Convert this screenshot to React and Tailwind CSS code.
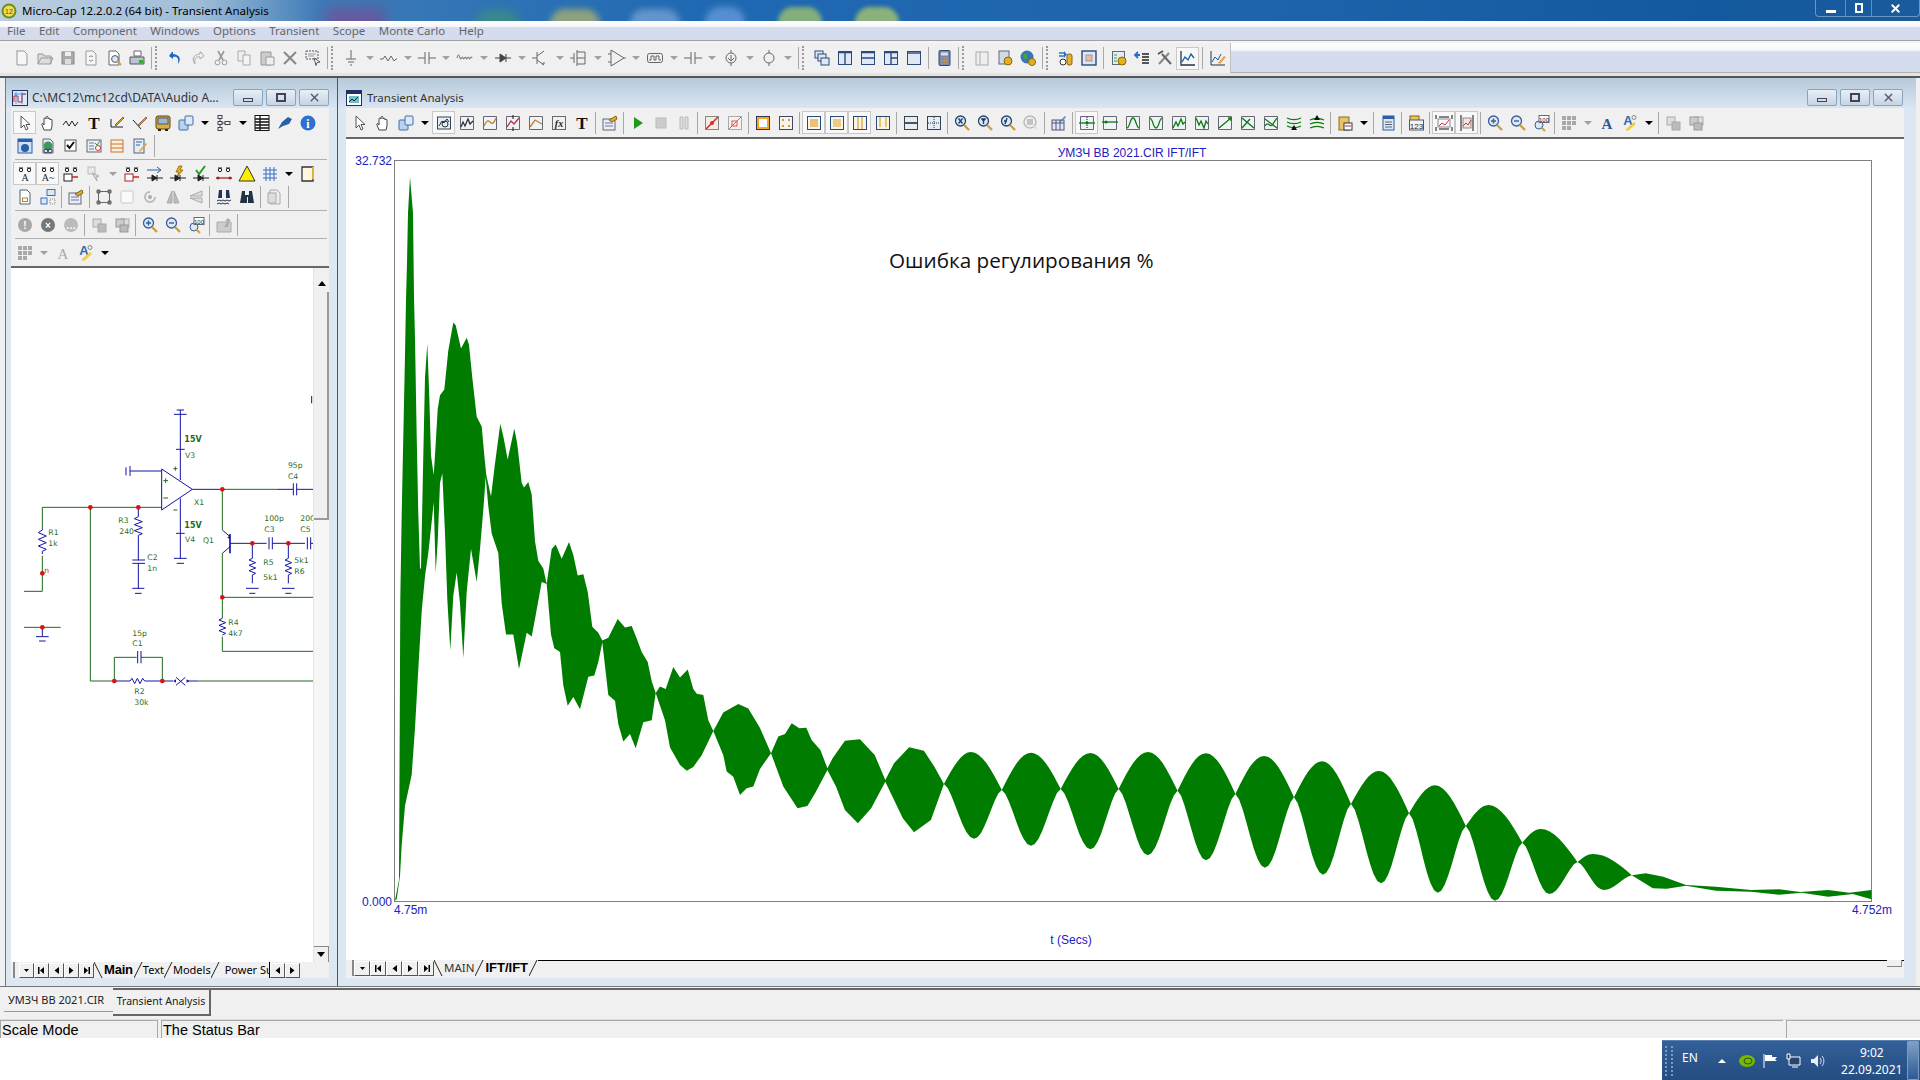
import { X } from "lucide-react";

// waveform outline, traced per crop then mapped to page coords
const z9 = (p) => p.map(([x, y]) => [395 + x / 3, 300 + y / 2.57]);
const z10 = (p) => p.map(([x, y]) => [780 + x / 2.85, 680 + y / 3]);
const z11 = (p) => p.map(([x, y]) => [1330 + x / 2.85, 720 + y / 3]);

// regular beat lobes on the right: pinch x,y then top peak and bottom peak
const pinches = [[943.9,784],[1001.8,790],[1060.7,789],[1118.6,789],[1177.5,790.7],[1235.4,794],[1294,797.3],[1351,804],[1409,813.3],[1465.8,826],[1522.3,842.7],[1577.4,862],[1631.8,875.3]];
const topPk = [[971,752],[1031,752.7],[1090.5,753],[1148,752],[1206,753.3],[1264,756],[1322,761.3],[1379,771],[1435,785.3],[1488.6,805],[1540.5,829],[1593,854]];
const botPk = [[974,838.7],[1031,845.7],[1090.5,849.3],[1147.7,855.3],[1206,860.3],[1265,867.7],[1323,874.7],[1381,883.3],[1437.7,892.7],[1495,900.7],[1549.3,894],[1603.7,890]];
const side = (a, b, f) => {
  const out = [];
  for (let i = 0; i <= 8; i++) {
    const u = i / 8;
    out.push([a[0] + (b[0] - a[0]) * u, a[1] + (b[1] - a[1]) * f(u)]);
  }
  return out;
};
const dome = (u) => Math.sin((u * Math.PI) / 2);
const tip = (u) => Math.pow(Math.sin((u * Math.PI) / 2), 1.6);
const lobesTop = pinches.slice(0, -1).flatMap((p, i) => [
  ...side(p, topPk[i], dome),
  ...side(pinches[i + 1], topPk[i], dome).reverse().slice(1),
]);
const lobesBot = pinches.slice(0, -1).flatMap((p, i) => [
  ...side(p, botPk[i], tip),
  ...side(pinches[i + 1], botPk[i], tip).reverse().slice(1),
]).reverse();

const wave = [
  ...z9([[0,1543],[12,1490],[16,770],[20,550],[25,350],[30,140],[33,0]]),
  [407,263],[408,213],[410,177],[413,213],[414,297],
  ...z9([[60,100],[65,350],[70,550],[75,690],[78,690],[85,400],[90,200],[97,112],[103,250],[108,400],[116,450],[120,400],[128,280],[135,245],[148,230],[160,130],[175,58],[182,65],[198,125],[215,97],[222,115],[232,200],[245,300],[260,325],[268,400],[274,450],[288,505],[300,420],[316,318],[325,350],[338,410],[358,330],[367,370],[380,470],[387,482],[400,468],[410,500],[420,620],[430,670],[445,690],[455,730],[470,640],[482,628],[500,665],[522,622],[535,655],[548,708],[565,705],[578,750],[592,840],[610,855],[622,875],[640,868],[668,820],[690,842],[710,838],[725,870],[740,905],[758,930],[770,980],[782,1010],[795,993],[812,1000],[835,943],[855,970],[878,950],[895,1000],[905,1012],[925,1015],[940,1080],[955,1108],[985,1060],[1030,1038],[1060,1050],[1095,1100],[1128,1165],[1150,1122],[1170,1115],[1190,1088]]),
  ...z10([[55,145],[75,143],[90,180],[115,210],[135,265],[150,235],[185,182],[228,178],[270,225],[300,300],[325,250],[368,202],[410,212],[440,260]]),
  ...lobesTop,
  ...z11([[900,460],[950,470],[1015,495],[1100,500],[1200,510],[1280,508],[1340,516],[1420,510],[1480,518],[1543,510],[1543,538],[1490,522],[1420,530],[1345,518],[1280,524],[1200,515],[1100,512],[1015,497],[960,506],[920,505]]),
  ...lobesBot,
  ...z10([[430,420],[382,457],[350,415],[300,305],[260,385],[222,430],[185,390],[160,320],[135,270],[100,340],[78,378],[50,385]]),
  ...z9([[1165,1250],[1128,1165],[1095,1205],[1075,1250],[1055,1255],[1035,1272],[1015,1225],[995,1212],[985,1170],[955,1108],[920,1170],[895,1200],[875,1210],[855,1195],[825,1150],[810,1080],[782,1010],[770,1080],[745,1085],[722,1152],[705,1115],[685,1135],[670,1090],[660,1030],[640,1015],[622,880],[610,930],[598,965],[580,968],[555,1052],[535,1020],[518,1043],[505,990],[495,905],[478,895],[468,860],[455,730],[440,725],[420,820],[410,865],[395,855],[372,948],[355,860],[333,860],[320,780],[310,650],[290,600],[280,530],[272,455],[265,540],[255,640],[245,725],[228,640],[215,750],[205,920],[195,780],[185,700],[175,760],[166,900],[157,770],[150,600],[142,445],[135,470],[128,620],[122,700],[116,520],[110,570],[100,650],[90,710],[80,800],[70,950],[60,1100],[50,1220],[30,1300],[20,1400],[15,1480],[5,1540]]),
];
const wavePts = wave.map(([x, y]) => `${x.toFixed(1)},${y.toFixed(1)}`).join(" ");

// toolbar glyph helpers
const S = (p) => <g fill="none" strokeWidth="1" {...p} />;
const page = (c = "#999", f = "#f6f6f6") => <path d="M4 2h7l3 3v11H4z" fill={f} stroke={c} />;
const peak = (d, c = "#0a7a0a") => (
  <>
    <path d="M2.5 2.5h13v13h-13z" fill="#eef3f8" stroke="#667" />
    <path d={d} fill="none" stroke={c} strokeWidth="1.3" />
  </>
);
const win = (inner) => (
  <>
    <rect x="2.5" y="2.5" width="13" height="13" fill="#dfe9f6" stroke="#2b4a7a" />
    <path d={inner} fill="none" stroke="#2b4a7a" strokeWidth="1.4" />
  </>
);
const comp = (d) => <path d={d} fill="none" stroke="#666" />;
const mag = (sign, c = "#3a5d9a") => (
  <>
    <circle cx="7.5" cy="7" r="5" fill="#dbe8f6" stroke={c} strokeWidth="1.3" />
    <path d="M11 11l5 5" stroke="#c9a13d" strokeWidth="2.4" />
    <path d={sign} stroke={c} strokeWidth="1.4" />
  </>
);
const round = (label, f = "#a8a8a8") => (
  <>
    <circle cx="9" cy="9" r="7" fill={f} />
    <text x="9" y="12.5" fontSize="10" fontWeight="700" textAnchor="middle" fill="#fff" fontFamily="Liberation Sans, sans-serif">{label}</text>
  </>
);
const probe = (label, c = "#222") => (
  <>
    <path d="M3 3h4M11 3h4" stroke="#222" strokeWidth="1" />
    <circle cx="5" cy="5" r="1.7" fill="none" stroke="#222" />
    <circle cx="13" cy="5" r="1.7" fill="none" stroke="#222" />
    <text x="9" y="16" fontSize="10" textAnchor="middle" fill={c} fontFamily="Liberation Serif, serif">{label}</text>
  </>
);
const diodeH = <path d="M1 13h16M6 10l5 3-5 3zM11 10v6" fill="#222" stroke="#222" />;
const stack = (c = "#aaa") => (
  <>
    <rect x="3" y="3" width="8" height="8" fill="#ddd" stroke={c} />
    <rect x="8" y="8" width="8" height="8" fill="#bbb" stroke={c} />
  </>
);
const bars = (c) => (
  <>
    <rect x="2.5" y="2.5" width="13" height="13" fill="#f8f4e6" stroke="#2b4a7a" />
    <path d={c} stroke="#e0a030" strokeWidth="1.2" fill="none" />
  </>
);
const cube = (
  <>
    <rect x="2" y="6" width="9" height="10" rx="1" fill="#b9d2ee" stroke="#3f6da8" />
    <rect x="8" y="2" width="8" height="9" rx="1" fill="#dce9f8" stroke="#3f6da8" />
  </>
);
const clipB = (
  <>
    <rect x="3" y="3" width="10" height="13" fill="#e6c46a" stroke="#8a6a20" />
    <rect x="8" y="9" width="8" height="7" fill="#fff" stroke="#335" />
    <path d="M9 12h6" stroke="#a33" />
  </>
);

const ic = {
  new: <>{page()}<path d="M3 1l1 2 2-1" stroke="#bbb" fill="none" /></>,
  open: <path d="M2 15V5h5l1 2h7v8zM2 15l3-6h12l-3 6" fill="#ddd" stroke="#999" />,
  save: <><rect x="3" y="3" width="12" height="12" fill="#aaa" stroke="#888" /><rect x="6" y="3" width="6" height="4" fill="#eee" /><rect x="6" y="10" width="6" height="5" fill="#ddd" /></>,
  saveas: <>{page()}<path d="M7 8a2.5 2.5 0 014 0M11 11a2.5 2.5 0 01-4 0" stroke="#888" fill="none" /></>,
  preview: <>{page("#667", "#fff")}<circle cx="10" cy="10" r="3.4" fill="#dde8f5" stroke="#556" /><path d="M12 12l4 4" stroke="#c9a13d" strokeWidth="2.2" /></>,
  print: <><path d="M6 2h7v5H6z" fill="#fff" stroke="#667" /><path d="M2 8h14v7H2z" fill="#bcc4cc" stroke="#556" /><rect x="11" y="11" width="4" height="3" fill="#3a3" /></>,
  undo: <path d="M6 3L3 7l4 3V8c4-1 6 1 5 7 3-4 3-9-5-10V3z" fill="#1d66c8" />,
  redo: <path d="M12 3l3 4-4 3V8C7 7 5 9 6 15 3 11 3 6 11 5V3z" fill="none" stroke="#aaa" />,
  cut: <S stroke="#999"><path d="M6 2l5 9M12 2l-5 9" strokeWidth="1.6" /><circle cx="5.5" cy="13.5" r="2.4" /><circle cx="12.5" cy="13.5" r="2.4" /></S>,
  copy: <><path d="M3 2h7v10H3z" fill="#eee" stroke="#aaa" /><path d="M8 6h7v10H8z" fill="#f4f4f4" stroke="#aaa" /></>,
  paste: <><path d="M3 3h10v13H3z" fill="#ccc" stroke="#999" /><path d="M8 8h8v8H8z" fill="#eee" stroke="#999" /></>,
  del: <path d="M3 3l12 12M15 3L3 15" stroke="#888" strokeWidth="2" />,
  sel: <><path d="M2 2h12v8H2z" fill="none" stroke="#556" strokeDasharray="2 1" /><path d="M4 5h8M4 7h6" stroke="#99a" /><path d="M10 9l6 4-3 .5-1 3z" fill="#fff" stroke="#556" /></>,
  ground: comp("M9 1v9M4 10h10M6 13h6M8 16h2"),
  res: comp("M0 10l3 0 2-3 3 5 3-5 3 5 2-2h1"),
  cap: comp("M0 9h7M7 3v12M11 3v12M11 9h7"),
  ind: comp("M1 9c1-4 2-4 3 0s2-4 3 0 2-4 3 0 2-4 3 0 2-4 3 0"),
  diode: <path d="M1 9h16M6 5l6 4-6 4zM12 5v8" fill="#444" stroke="#444" />,
  bjt: comp("M5 3v12M5 7l7-5M5 11l7 5M0 9h5M10 15h2v-2"),
  mos: comp("M7 1v16M4 4v10M0 9h4M7 3h8M7 15h8M7 9h8M15 3v12"),
  opamp: comp("M3 1v16l13-8zM0 5h3M0 13h3M16 9h2"),
  pulse: <><rect x="1.5" y="4.5" width="15" height="9" rx="2" fill="none" stroke="#666" /><path d="M3 11h2V7h3v4h2V7h3v4h2" fill="none" stroke="#666" /></>,
  vs: <><circle cx="9" cy="9" r="5" fill="none" stroke="#666" /><path d="M9 1v3M9 14v3M9 6v6M6 9l3 3 3-3" fill="none" stroke="#666" /></>,
  bat: <><circle cx="9" cy="9" r="5" fill="none" stroke="#666" /><path d="M9 1v3M9 14v3" stroke="#666" /></>,
  cascade: <><rect x="2" y="2" width="8" height="7" fill="#dfe9f6" stroke="#2b4a7a" /><rect x="5" y="5" width="8" height="7" fill="#dfe9f6" stroke="#2b4a7a" /><rect x="8" y="9" width="8" height="7" fill="#dfe9f6" stroke="#2b4a7a" /></>,
  tilev: win("M9 3v12M3 3.5h12"),
  tileh: win("M3 9h12M3 3.5h12"),
  tile3: win("M9 3v12M9 9h6M3 3.5h12"),
  maxw: win("M3 4h12"),
  calc: <><rect x="4" y="1.5" width="11" height="15" rx="1" fill="#7389ad" stroke="#3a4a66" /><rect x="6" y="3.5" width="7" height="3" fill="#dde" /><path d="M6 9h7M6 11.5h7M6 14h7" stroke="#e8a050" strokeDasharray="1.5 1" /></>,
  panel: <><rect x="3" y="3" width="12" height="13" fill="#eee" stroke="#aaa" /><path d="M7 3v13" stroke="#aaa" /></>,
  cfg: <><rect x="3" y="2" width="10" height="13" fill="#cfdbe8" stroke="#667" /><circle cx="12" cy="12" r="4" fill="#e4b020" stroke="#8a6a10" /></>,
  globe: <><circle cx="8" cy="8" r="6.5" fill="#3a76b6" /><path d="M4 6c3-3 5 0 4 3s-3 2-4-3z" fill="#4aa04a" /><circle cx="13" cy="13" r="3.5" fill="#e4b020" stroke="#8a6a10" /></>,
  meter: <><path d="M2 4h6M2 7h6" stroke="#27c" strokeWidth="1.4" /><path d="M7 2l3 3.5L7 9" fill="#27c" /><circle cx="6" cy="13" r="3" fill="#fff" stroke="#333" /><rect x="10" y="5" width="5" height="11" rx="2" fill="#e6b030" stroke="#860" /></>,
  box: <><rect x="2" y="2" width="14" height="14" fill="#dbe7f4" stroke="#2b4a7a" strokeWidth="1.4" /><rect x="6" y="6" width="6" height="6" fill="#f0b8a0" stroke="#999" /></>,
  chkgear: <><rect x="2.5" y="2.5" width="12" height="13" fill="#e4edf6" stroke="#667" /><path d="M4 6h3M4 9h3M4 12h3" stroke="#3a3" /><circle cx="12" cy="12" r="4" fill="#e4b020" stroke="#8a6a10" /></>,
  sort: <><path d="M2 6h5M5 3L2 6l3 3" stroke="#2a6bc8" strokeWidth="1.8" fill="none" /><path d="M9 5h7M9 8h7M9 11h7M9 14h7" stroke="#222" strokeWidth="1.4" /></>,
  tools: <><path d="M3 15L13 4" stroke="#888" strokeWidth="2" /><path d="M15 15L6 5" stroke="#666" strokeWidth="2" /><path d="M2 5l5-3" stroke="#555" strokeWidth="2" /></>,
  chart: <><path d="M2 2v14h14" stroke="#234" strokeWidth="1.3" fill="none" /><path d="M3 13l3-5 3 3 3-6 3 4" stroke="#1a5a9a" strokeWidth="1.3" fill="none" /></>,
  chartedit: <><path d="M2 2v14h14" stroke="#234" fill="none" /><path d="M3 13l3-5 3 3 3-6" stroke="#1a5a9a" fill="none" /><path d="M9 14l6-7 2 1-6 7z" fill="#e6a050" /></>,
  cursor: <path d="M5 2v12l3-3 2 5 2-1-2-4.5h4z" fill="#fff" stroke="#555" />,
  hand: <path d="M5 16l-2-5c-.5-2 1-2 2 0V5c0-1.500 2-1.500 2 0V3.500c0-1.500 2-1.500 2 0V5c0-1 2-1 2 0v1c0-1 2-1 2 0v6l-1 4z" fill="#fff" stroke="#444" />,
  zig: <path d="M1 11l3-4 3 5 3-5 3 5 3-4" fill="none" stroke="#222" />,
  T: <text x="9" y="15" fontSize="17" fontWeight="700" textAnchor="middle" fill="#111" fontFamily="Liberation Serif, serif">T</text>,
  pen1: <><path d="M2 4v8h12" stroke="#123" fill="none" transform="translate(1 1)" /><path d="M7 11l8-8 1 1-8 8z" fill="#e0a030" stroke="#964" /></>,
  pen2: <><path d="M2 6l8 9" stroke="#123" /><path d="M7 11l8-8 1 1-8 8z" fill="#e0a030" stroke="#964" /></>,
  bus: <><rect x="2" y="2" width="14" height="13" rx="2" fill="#d6b040" stroke="#5a4510" /><rect x="4" y="4" width="10" height="6" fill="#9fb6d0" stroke="#556" /><path d="M4 16h3M11 16h3" stroke="#222" strokeWidth="2" /></>,
  cube,
  tree: <S stroke="#445"><rect x="3" y="1.500" width="4" height="3" /><rect x="3" y="7.500" width="4" height="3" /><rect x="3" y="13.500" width="4" height="3" /><rect x="10" y="7.500" width="5" height="3" /><path d="M5 4.500v3M5 10.500v3M7 9h3" /></S>,
  table: <><rect x="2" y="1.500" width="14" height="15" fill="#fff" stroke="#111" /><path d="M2 5h14M2 8h14M2 11h14M2 14h14M7 2v14" stroke="#111" strokeWidth="1.3" /></>,
  pin: <path d="M2 15l4-7 6-5 4 2-3 5-6 2z" fill="#2b5fa8" />,
  info: <><circle cx="9" cy="9" r="7.5" fill="#2e6fd0" /><text x="9" y="14" fontSize="12" fontWeight="700" textAnchor="middle" fill="#fff" fontFamily="Liberation Serif, serif">i</text></>,
  help: <><rect x="2" y="2" width="14" height="14" fill="#cfe0f2" stroke="#2a5ea8" /><rect x="2" y="2" width="14" height="3" fill="#2a5ea8" /><circle cx="9" cy="11" r="4" fill="#2a5ea8" /></>,
  web: <>{page("#667", "#e8eef4")}<circle cx="9" cy="9" r="4.500" fill="#3a9a5a" /><circle cx="7" cy="14" r="2" fill="none" stroke="#336" /><circle cx="11" cy="14" r="2" fill="none" stroke="#336" /></>,
  chk: <><rect x="3" y="3" width="11" height="11" fill="#fff" stroke="#555" /><path d="M5 8l2.500 3L12 5" stroke="#111" strokeWidth="2" fill="none" /></>,
  form: <><rect x="2" y="3" width="14" height="12" fill="#e9f0f6" stroke="#667" /><path d="M4 6h5M4 9h5M4 12h5" stroke="#779" /><circle cx="13" cy="11" r="2.500" fill="#fff" stroke="#d33" /><path d="M10 6l2 2 3-4" stroke="#393" fill="none" /></>,
  rows: <><rect x="3" y="3" width="12" height="12" fill="#fbeedd" stroke="#c9762a" /><path d="M3 7h12M3 11h12" stroke="#c9762a" /></>,
  notepen: <><rect x="3" y="2" width="10" height="14" fill="#e4ecf6" stroke="#567" /><path d="M5 5h6M5 8h4" stroke="#36a" /><path d="M8 14l7-8 1 1-7 8z" fill="#e0a030" /></>,
  pa: probe("A"),
  pw: probe("A~"),
  pn: <>{probe("")}<rect x="2" y="9" width="8" height="7" fill="#fff" stroke="#222" /><path d="M10 12h6" stroke="#c22" strokeWidth="1.500" /></>,
  pv: <>{probe("")}<rect x="2" y="9" width="8" height="7" fill="#fff" stroke="#a22" /><path d="M10 12h6" stroke="#c22" strokeWidth="1.500" /></>,
  ghost: <><rect x="3" y="2" width="7" height="7" fill="#e8e8e8" stroke="#bbb" /><path d="M7 8l7 3-3 1 1 4z" fill="#ddd" stroke="#aaa" /></>,
  dArrow: <><path d="M1 5h13M11 2l4 3-4 3" stroke="#2a5ea8" fill="none" />{diodeH}</>,
  dBolt: <><path d="M10 1L7 7h3L8 12l6-7h-3l2-4z" fill="#e4b020" stroke="#a07510" />{diodeH}</>,
  dCheck: <><path d="M4 5l3 4 6-8" stroke="#2a9a2a" strokeWidth="2" fill="none" />{diodeH}</>,
  pline: <>{probe("")}<path d="M1 13h16" stroke="#a22" strokeWidth="1.300" /><circle cx="3" cy="13" r="1.500" fill="#a22" /><circle cx="15" cy="13" r="1.500" fill="#a22" /></>,
  tri: <path d="M9 1L17 16H1z" fill="#ffee00" stroke="#333" />,
  grid: <path d="M2 5h14M2 9h14M2 13h14M5 2v14M9 2v14M13 2v14" stroke="#3a6fc0" fill="none" />,
  note: <><path d="M3 2h11v14H3z" fill="#fff7dd" stroke="#333" strokeWidth="1.300" /><path d="M14 2v12" stroke="#e0b040" strokeWidth="2" /></>,
  pageO: <>{page("#467", "#fff")}<rect x="6.500" y="10" width="5" height="3.500" fill="none" stroke="#c9762a" /></>,
  flow: <><rect x="8" y="1.500" width="8" height="6" fill="#dde8f4" stroke="#3a6fc0" /><rect x="2" y="10" width="6" height="6" fill="#dde8f4" stroke="#3a6fc0" /><rect x="11" y="11" width="5" height="5" fill="none" stroke="#888" strokeDasharray="1 1" /></>,
  clip: <><rect x="2" y="5" width="12" height="11" fill="#e6eef6" stroke="#667" /><path d="M4 9h8M4 12h8" stroke="#77a" /><path d="M8 6l7-4 1 3-5 3z" fill="#d8aa40" stroke="#860" /></>,
  handles: <S stroke="#666"><rect x="3.500" y="3.500" width="11" height="11" /><path d="M2 2h3v3H2zM13 2h3v3h-3zM2 13h3v3H2zM13 13h3v3h-3z" fill="#777" /></S>,
  blank: <rect x="3" y="3" width="12" height="12" rx="1.500" fill="#fafafa" stroke="#c8c8c8" />,
  rot: <><path d="M14 9a5 5 0 11-5-5" stroke="#bbb" strokeWidth="2" fill="none" /><circle cx="9" cy="9" r="2" fill="#aaa" /></>,
  mirv: <path d="M8 3v12H3zM10 3v12h5z" fill="#bbb" stroke="#aaa" />,
  mirh: <path d="M15 8H3l12-5zM15 10H3l12 5z" fill="#ddd" stroke="#aaa" />,
  binW: <><path d="M4 2h3v8H3zM11 2h3l1 8h-4z" fill="#235" /><path d="M2 13l2-1 2 1 2-1 2 1 2-1 2 1 2-1" stroke="#235" fill="none" /><path d="M2 16l2-1 2 1 2-1 2 1 2-1 2 1" stroke="#235" fill="none" /></>,
  bin: <><path d="M4 3h3v4h4V3h3l2 12h-6V9H9v6H2z" fill="#234" /></>,
  pclip: <>{page("#aaa", "#eee")}<rect x="2" y="5" width="8" height="10" fill="#ddd" stroke="#aaa" /></>,
  r1: round("!"),
  r2: round("×", "#777"),
  r3: round("…", "#bbb"),
  stack: stack(),
  stack2: <><rect x="8" y="3" width="8" height="8" fill="#ddd" stroke="#aaa" /><rect x="3" y="3" width="8" height="8" fill="#ccc" stroke="#999" /><rect x="7" y="9" width="8" height="7" fill="#bbb" stroke="#999" /></>,
  zin: mag("M5 7h5M7.500 4.500v5"),
  zout: mag("M5 7h5"),
  z100: <><circle cx="7" cy="11" r="4" fill="#dbe8f6" stroke="#3a5d9a" /><path d="M9 13l4 4" stroke="#c9a13d" strokeWidth="2" /><rect x="7" y="1.500" width="10" height="7" fill="#fff" stroke="#667" /><text x="12" y="7.500" fontSize="6" textAnchor="middle" fill="#223" fontFamily="Liberation Sans, sans-serif">100</text></>,
  folderUp: <><path d="M2 6h14v10H2z" fill="#ccc" stroke="#aaa" /><path d="M9 11l4-6-3 0 3-3 3 3h-2l-1 6z" fill="#aaa" /></>,
  dots: <path d="M2 2h4v4H2zM7 2h4v4H7zM12 2h4v4h-4zM2 7h4v4H2zM7 7h4v4H7zM12 7h4v4h-4zM2 12h4v4H2zM7 12h4v4H7z" fill="#a8a8a8" />,
  fontG: <text x="9" y="15" fontSize="15" textAnchor="middle" fill="#aaa" fontFamily="Liberation Serif, serif">A</text>,
  fontB: <text x="9" y="15" fontSize="15" fontWeight="700" textAnchor="middle" fill="#2e5a96" fontFamily="Liberation Serif, serif">A</text>,
  fontC: <><text x="7" y="11" fontSize="13" fontWeight="700" textAnchor="middle" fill="#2e6bb0" fontFamily="Liberation Sans, sans-serif">A</text><path d="M4 16l9-8 2 2-8 7z" fill="#f0d040" /><circle cx="13" cy="3.500" r="2" fill="none" stroke="#888" /></>,
  scale: <><rect x="2.500" y="3" width="13" height="12" fill="#e4edf6" stroke="#345" /><path d="M4 12l3-5 2 2 3-4 2 3" stroke="#234" fill="none" /><circle cx="10" cy="10" r="3" fill="none" stroke="#333" /></>,
  plots: <>{peak("M3 13l2-5 2 4 3-7 2 5 3-3", "#333")}</>,
  fit1: peak("M3 12c3-6 4-6 6-4s3 3 6-4", "#c27f20"),
  fit2: <>{peak("M3 13l4-6 3 3 5-6", "#b33")}<path d="M9 1v4M9 13v4" stroke="#111" /></>,
  fit3: peak("M3 13l5-7 7 4", "#c27f20"),
  fx: <><rect x="2.500" y="2.500" width="13" height="13" fill="#f6f1e0" stroke="#667" /><text x="9" y="13" fontSize="10" fontStyle="italic" fontWeight="700" textAnchor="middle" fill="#222" fontFamily="Liberation Serif, serif">fx</text></>,
  run: <path d="M5 3l9 6-9 6z" fill="#1f9a1f" />,
  stop: <rect x="4" y="4" width="10" height="10" fill="#ccc" stroke="#bbb" />,
  pause: <path d="M5 3h3v12H5zM10 3h3v12h-3z" fill="#ddd" stroke="#bbb" />,
  line1: <><rect x="2.500" y="2.500" width="13" height="13" fill="#f8e8e0" stroke="#888" /><path d="M3 15L15 3" stroke="#c33" strokeWidth="1.600" /><circle cx="9" cy="9" r="2" fill="#c33" /></>,
  line2: <><rect x="2.500" y="2.500" width="13" height="13" fill="#fbf0ea" stroke="#aaa" /><path d="M3 15L15 3" stroke="#d55" /><rect x="6" y="7" width="5" height="5" fill="none" stroke="#d55" /></>,
  gold: <><rect x="2.500" y="2.500" width="13" height="13" fill="#f5a623" stroke="#335" /><rect x="5" y="5" width="8" height="8" fill="#fff" /></>,
  plus4: <><rect x="2.500" y="2.500" width="13" height="13" fill="#f4f4e8" stroke="#446" /><path d="M5 6h2M6 5v2M11 6h2M12 5v2M5 12h2M6 11v2M11 12h2M12 11v2" stroke="#c27f20" /></>,
  barsV: bars("M6 5v8M8 5v8M10 5v8M12 5v8"),
  barsH: bars("M5 6h8M5 8h8M5 10h8M5 12h8"),
  barsT: bars("M7 3v12M11 3v12"),
  barsN: bars("M6 3v10M12 3v10"),
  hr: <><rect x="2.500" y="2.500" width="13" height="13" fill="#e4edf6" stroke="#345" /><path d="M3 9h12" stroke="#111" strokeWidth="1.400" /></>,
  hd: <><rect x="2.500" y="2.500" width="13" height="13" fill="#e4edf6" stroke="#345" /><path d="M3 9h12M9 3v12" stroke="#333" strokeDasharray="1 1" /></>,
  mx: mag("M5.500 4.500l4 5M9.500 4.500l-4 5", "#23426e"),
  my: mag("M5.500 4.500l2 2.500 2-2.500M7.500 7v3", "#23426e"),
  mf: mag("M6 10l2-6M5 7h3", "#23426e"),
  mg: <><circle cx="8" cy="8" r="6" fill="#eee" stroke="#bbb" strokeWidth="1.500" /><path d="M5 6h6M5 8h6M5 10h6" stroke="#999" /><path d="M12 12l3 3" stroke="#ddd" strokeWidth="2" /></>,
  tbl: <><rect x="2" y="6" width="12" height="10" fill="#dfe9f6" stroke="#557" /><path d="M2 9h12M6 6v10M10 6v10" stroke="#557" /><path d="M9 8l6-6 1 1-6 6z" fill="#5a7fc0" /></>,
  g1: <>{peak("M1 9h16", "#0a7a0a")}<path d="M9 3v12" stroke="#111" strokeDasharray="1 1" /><circle cx="9" cy="9" r="1.500" fill="#0a7a0a" /></>,
  g2: <>{peak("M1 8h16", "#0a7a0a")}<circle cx="5" cy="8" r="1.500" fill="#0a7a0a" /></>,
  g3: peak("M3 14c3-1 3-10 6-10s3 9 6 10"),
  g4: peak("M3 4c3 1 3 10 6 10s3-9 6-10"),
  g5: peak("M3 14l3-6 2 4 3-7 2 5 2-2"),
  g6: peak("M3 4l3 7 2-4 3 7 2-7 2 3"),
  g7: peak("M3 14L15 4M12 4h3v3"),
  g8: peak("M3 4l12 10M3 14l8-9"),
  g9: peak("M3 12c3-6 5 3 8-2s2-3 4-6M3 5l12 9"),
  g10: <><path d="M2 4c4 2 10 2 14 0M2 8c4 2 10 2 14 0M2 12c4 2 10 2 14 0" stroke="#0a7a0a" fill="none" strokeWidth="1.300" /><path d="M9 11l-3 5h6z" fill="#111" /></>,
  g11: <><path d="M2 6c4-2 10-2 14 0M2 10c4-2 10-2 14 0M2 14c4-2 10-2 14 0" stroke="#0a7a0a" fill="none" strokeWidth="1.300" /><path d="M9 1L6 6h6z" fill="#111" /></>,
  clipB,
  doc: <><rect x="4" y="2" width="11" height="14" fill="#dce7f4" stroke="#2a5ea8" /><rect x="4" y="2" width="11" height="3" fill="#2a5ea8" /><path d="M6 8h7M6 10.500h7M6 13h7" stroke="#567" /></>,
  c123: <><rect x="3" y="2" width="9" height="6" fill="#e6c46a" stroke="#860" /><rect x="2.500" y="6" width="14" height="10" fill="#f4f4f4" stroke="#556" /><text x="9.500" y="14.500" fontSize="8" textAnchor="middle" fill="#223" fontFamily="Liberation Sans, sans-serif">123</text></>,
  fitH: <><path d="M4 3h10M4 15h10" stroke="#111" /><path d="M1 1v4M17 1v4M1 13v4M17 13v4" stroke="#111" /><path d="M4 12l3-3 3 2 4-5" stroke="#c33" fill="none" /><rect x="3" y="5" width="12" height="8" fill="none" stroke="#889" /></>,
  fitV: <><path d="M3 1v16M15 1v16" stroke="#111" /><rect x="5" y="4" width="8" height="10" fill="#f0e4e4" stroke="#889" /><path d="M5 12l3-3 2 2 3-5" stroke="#c33" fill="none" /></>,
};

const Bar = ({ items, className = "" }) => (
  <div className={`flex items-center h-[23px] ${className}`}>
    {items.map((t, i) => {
      if (t === "|") return <div key={i} className="w-[7px] h-[22px] flex justify-center"><div className="w-px h-full bg-[#a8a8a8]" /></div>;
      if (t === "!") return <div key={i} className="w-[5px] h-[22px] flex justify-center"><div className="w-px h-full bg-[#a8a8a8]" /></div>;
      if (t === ":") return <div key={i} className="w-[8px] h-[24px] border-l-2 border-dotted border-[#9a9a9a]" />;
      if (t === "v" || t === "V")
        return (
          <div key={i} className="w-[15px] flex justify-center">
            <div className={`border-x-[4px] border-t-[4px] border-x-transparent ${t === "v" ? "border-t-black" : "border-t-[#a0a0a0]"}`} />
          </div>
        );
      const active = t.endsWith("*");
      return (
        <div key={i} className={`w-[23px] h-[23px] flex items-center justify-center ${active ? "border border-[#c8c8c8] bg-[#f8f8f8]" : ""}`}>
          <svg width="18" height="18" viewBox="0 0 18 18" className="overflow-visible">{ic[active ? t.slice(0, -1) : t]}</svg>
        </div>
      );
    })}
  </div>
);

const WinBtns = () => (
  <div className="flex gap-[3px]">
    <div className="w-[30px] h-[17px] border border-[#8aa3bd] rounded-[2px] bg-[linear-gradient(#e8eff6,#c5d4e3)] flex items-end justify-center pb-[3px]">
      <div className="w-[10px] h-[4px] border border-[#445]" />
    </div>
    <div className="w-[30px] h-[17px] border border-[#8aa3bd] rounded-[2px] bg-[linear-gradient(#e8eff6,#c5d4e3)] flex items-center justify-center">
      <div className="w-[10px] h-[9px] border-2 border-[#445]" />
    </div>
    <div className="w-[30px] h-[17px] border border-[#8aa3bd] rounded-[2px] bg-[linear-gradient(#e8eff6,#c5d4e3)] flex items-center justify-center">
      <X className="w-[13px] h-[13px] text-[#556]" strokeWidth={2.5} />
    </div>
  </div>
);

const NavBtn = ({ d, wide }) => (
  <div className={`h-[15px] ${wide ? "w-[16px]" : "w-[15px]"} bg-[#f0f0f0] border border-t-[#fff] border-l-[#fff] border-r-[#555] border-b-[#555] flex items-center justify-center`}>
    <svg width="9" height="9" viewBox="0 0 9 9"><path d={d} fill="#000" /></svg>
  </div>
);
const navIcons = ["M2 3h5L4.500 6z", "M1 1h1.500v7H1zM7 1v7L3 4.500z", "M7 1v7L2.500 4.500z", "M2 1v7l4.500-3.500z", "M2 1v7l4-3.500zM6.500 1H8v7H6.500z"];

const Slash = ({ back }) => (
  <svg width="9" height="16" viewBox="0 0 9 16" className="shrink-0">
    <path d={back ? "M0 0l8 16" : "M8 0L0 16"} stroke="#222" strokeWidth="1" />
  </svg>
);

const sans = "font-['Liberation_Sans',Arial,sans-serif]";
const seg = "font-['Noto_Sans',sans-serif]";

function Schematic() {
  const g = "#1d6b1d";
  const b = "#1414a8";
  const dots = [[271,352],[415,352],[127,550],[667,298],[757,460],[865,460],[667,622],[127,712],[343,873],[487,873]];
  const labels = [
    ["R1",145,436],["1k",145,469],["R3",355,400],["240",358,433],["C2",442,511],["1n",442,544],["V3",555,205],["X1",582,346],["V4",555,457],["Q1",609,460],
    ["95p",864,233],["C4",864,266],["100p",793,392],["C3",793,425],["20C",901,392],["C5",901,425],["R5",790,526],["5k1",790,571],["5k1",883,520],["R6",883,553],
    ["R4",685,706],["4k7",685,739],["15p",397,738],["C1",397,769],["R2",403,913],["30k",403,944],
  ];
  return (
    <svg viewBox="33 -366 906 2082" className="w-[302px] h-[694px] shrink-0 bg-white">
      <g fill="none" stroke={g} strokeWidth="3">
        <path d="M72 604h55v-107M127 415v-63h358M271 352v521h72M667 298h163M667 298v122M667 490v132M667 622h273M667 622v63M667 740v44h273M72 712h110M343 873v-71h67M423 802h64v71M595 873h345" />
      </g>
      <g fill="none" stroke={b} strokeWidth="3">
        <path d="M127 415v5l-12 8 24 10-24 10 24 10-24 10 24 10-12 6v8" />
        <path d="M415 352v28l-12 6 24 9-24 9 24 9-24 9 24 9-12 5v75M397 510h38M397 520h38M415 520v75M397 595h36M405 610h20" />
        <path d="M485 237v123l92-62zM577 298h90M390 243h95M390 228v30M378 232v24" />
        <path d="M541 73v197M522 73h38M530 60h22M541 60v13M528 178h26M541 325v180M528 430h26M522 505h38M530 520h22" />
        <path d="M830 298h50M890 298h50M880 280v36M890 280v36" />
        <path d="M667 420l23 20M667 490l23-20M690 460h110M817 460h98M932 460h8M922 442v36M932 442v36M807 442v36M817 442v36" />
        <path d="M757 460v45l-10 5 20 8-20 8 20 8-20 8 20 8-10 5v25M738 595h38M748 610h18M865 460v45l-10 5 20 8-20 8 20 8-20 8 20 8-10 5v25M846 595h38M856 610h18" />
        <path d="M667 685l-10 5 20 8-20 8 20 8-20 8 20 8-10 5" />
        <path d="M127 712v28M108 740h38M117 753h20M413 783v37M423 783v37" />
        <path d="M343 873h47l6-8 8 16 8-16 8 16 8-16 6 8h48M487 873h33M528 862l28 24M556 862l-28 24M560 873h35" />
        <path d="M935 18v22" />
      </g>
      <path d="M682 443l8-8v12z" fill={b} />
      <path d="M520 873l8-5v10zM568 873l-8-5v10z" fill={b} />
      <path d="M690 432v58" stroke={b} strokeWidth="5" />
      <path d="M490 272h14M497 265v14M490 324h14M520 236h12M526 230v12M520 360h12" stroke={g} strokeWidth="3" />
      {dots.map(([x, y], i) => <circle key={i} cx={x} cy={y} r="7" fill="#e01010" />)}
      <text x="133" y="548" fontSize="23" fill="#d02020" fontFamily="DejaVu Sans, sans-serif">n</text>
      <text x="553" y="155" fontSize="24" fontWeight="700" fill={g} fontFamily="DejaVu Sans, sans-serif">15V</text>
      <text x="553" y="413" fontSize="24" fontWeight="700" fill={g} fontFamily="DejaVu Sans, sans-serif">15V</text>
      {labels.map(([t, x, y], i) => (
        <text key={i} x={x} y={y} fontSize="23" fill="#2c6e2c" fontFamily="DejaVu Sans, sans-serif">{t}</text>
      ))}
    </svg>
  );
}

function Plot() {
  const blue = "#2020c0";
  return (
    <svg viewBox="346 139 1558 821" className="w-[1558px] h-[821px] bg-white block">
      <rect x="394.500" y="160.500" width="1477" height="741" fill="none" stroke="#808080" />
      <polygon points={wavePts} fill="#007c00" />
      <g fill={blue} fontSize="12" fontFamily="Liberation Sans, Arial, sans-serif">
        <text x="1132" y="157" textAnchor="middle">УМЗЧ ВВ 2021.CIR IFT/IFT</text>
        <text x="392" y="165" textAnchor="end">32.732</text>
        <text x="392" y="906" textAnchor="end">0.000</text>
        <text x="394" y="914">4.75m</text>
        <text x="1892" y="914" textAnchor="end">4.752m</text>
        <text x="1071" y="944" textAnchor="middle">t (Secs)</text>
      </g>
      <text x="889" y="268" fontSize="20.700" fill="#111" fontFamily="Open Sans, sans-serif">Ошибка регулирования %</text>
    </svg>
  );
}

export default function App() {
  const menu = ["File", "Edit", "Component", "Windows", "Options", "Transient", "Scope", "Monte Carlo", "Help"];
  const mainBar = [
    "new","open","save","saveas","preview","print","|",":",
    "undo","redo","cut","copy","paste","del","sel","|",":",
    "ground","V","res","V","cap","V","ind","V","diode","V","bjt","V","mos","V","opamp","V","pulse","V","cap","V","vs","V","bat","V","|",":",
    "cascade","tilev","tileh","tile3","maxw","|","calc","|",":",
    "panel","cfg","globe","|",":",
    "meter","box","|","chkgear","sort","tools","chart*","|","chartedit",
  ];
  const analysisBar = [
    "cursor","hand","cube","v","scale*","plots","fit1","fit2","fit3","fx","T","!","clip","!",
    "run","stop","pause","!","line1","line2","!","gold","plus4","!","barsV*","barsH*","barsT*","barsN","!","hr","hd","!",
    "mx","my","mf","mg","!","tbl","!","g1*","g2","g3","g4","g5","g6","g7","g8","g9","g10","g11","!","clipB","v","!","doc","!","c123","!",
    "fitH*","fitV*","!","zin","zout","z100","!","dots","V","fontB","fontC","v","!","stack","stack2",
  ];

  return (
    <div className={`w-[1920px] h-[1080px] overflow-hidden flex flex-col bg-white ${sans}`}>
      {/* Title bar */}
      <div className="relative h-[21px] shrink-0 overflow-hidden flex items-center bg-[linear-gradient(90deg,#bccfe0_0,#a0bdd8_200px,#3d7bb7_320px,#2069b2_700px,#1d63ab_1300px,#12599f_1700px,#1a5b9c_100%)]">
        <div className="absolute left-[325px] top-[8px] w-[60px] h-[30px] bg-[#8a3f8a] blur-[8px] opacity-60" />
        <div className="absolute left-[475px] top-[10px] w-[45px] h-[30px] rounded-full bg-[#3c9a70] blur-[5px] opacity-60" />
        <div className="absolute left-[550px] top-[9px] w-[50px] h-[30px] rounded-full bg-[#a7b070] blur-[3px] opacity-80" />
        <div className="absolute left-[630px] top-[9px] w-[50px] h-[30px] rounded-full bg-[#7da8d8] blur-[3px] opacity-70" />
        <div className="absolute left-[705px] top-[7px] w-[40px] h-[30px] rounded-full bg-[#6d9fe0] blur-[3px] opacity-70" />
        <div className="absolute left-[778px] top-[7px] w-[44px] h-[30px] rounded-full bg-[#9ec070] blur-[2px] opacity-80" />
        <div className="absolute left-[855px] top-[7px] w-[44px] h-[30px] rounded-full bg-[#a6c56e] blur-[2px] opacity-80" />
        <svg width="16" height="16" viewBox="0 0 16 16" className="ml-[1px] shrink-0 relative">
          <circle cx="8" cy="8" r="7.500" fill="#6a8d1e" />
          <circle cx="8" cy="8" r="5.500" fill="#f4dc4a" />
          <text x="8" y="11" fontSize="7" textAnchor="middle" fill="#733" fontFamily="Liberation Sans, sans-serif">12</text>
        </svg>
        <span className={`relative ml-[5px] text-[11.500px] text-black ${seg}`}>Micro-Cap 12.2.0.2 (64 bit) - Transient Analysis</span>
        <div className="absolute right-0 top-0 flex h-[17px] w-[105px] border border-t-0 border-[#8db0d2]/70 rounded-b-[4px] text-white items-center">
          <div className="w-[30px] flex justify-center border-r border-[#8db0d2]/60 h-full items-end pb-[3px]"><div className="w-[10px] h-[3px] bg-white" /></div>
          <div className="w-[26px] flex justify-center border-r border-[#8db0d2]/60 h-full items-center"><div className="w-[8px] h-[10px] border-2 border-white" /></div>
          <div className="flex-1 flex justify-center"><X className="w-[13px] h-[13px]" strokeWidth={3.5} /></div>
        </div>
      </div>

      {/* Menu */}
      <div className={`h-[20px] shrink-0 flex items-center pl-[1px] border-b border-[#a0a0a0] bg-[linear-gradient(#fff_0,#f4f6fb_30%,#d5dcee_35%,#d3dbed_100%)] text-[11.500px] text-[#666] ${seg}`}>
        {menu.map((m) => <span key={m} className="px-[6px] mr-[1.500px]">{m}</span>)}
      </div>
      <div className="h-[2px] shrink-0 bg-[#f4f4f4]" />

      {/* Main toolbar */}
      <div className="h-[30px] shrink-0 flex bg-[linear-gradient(#fff_0,#f4f6fb_25%,#d5dcee_30%,#d3dbed_100%)] border-b border-[#b0b0b0]">
        <div className="h-[30px] pl-[10px] pr-[1px] bg-[#f0f0f0] flex items-center border-r border-[#c0c0c0]">
          <Bar items={mainBar} />
        </div>
      </div>
      <div className="h-[5px] shrink-0 bg-[#e4e4e4] border-b-2 border-[#555]" />

      {/* MDI area */}
      <div className="h-[909px] shrink-0 flex pl-[5px] pr-[4px] bg-[#f0f0f0] border-b border-[#777]">
        {/* Schematic window */}
        <div className="w-[332px] flex flex-col border-l border-[#777] bg-[#dce7f2]">
          <div className="h-[30px] flex items-end pb-[2px] pl-[6px] pr-[8px] bg-[linear-gradient(#b7c9da,#d9e5f1)]">
            <svg width="16" height="16" viewBox="0 0 16 16" className="mr-[4px] shrink-0">
              <rect x="0.500" y="0.500" width="15" height="15" fill="#dfe9f6" stroke="#1f2f6a" />
              <path d="M2 12V6h4v6h4V4h4" fill="none" stroke="#c22" />
              <path d="M2 4h12M4 2v12M10 2v12" stroke="#27c" strokeWidth="0.700" />
            </svg>
            <span className={`text-[12px] leading-[17px] text-[#333] whitespace-nowrap ${seg}`}>C:\MC12\mc12cd\DATA\Audio A...</span>
            <div className="ml-auto"><WinBtns /></div>
          </div>
          <div className="ml-[5px] w-[318px] h-[160px] bg-[#f0f0f0] border-b-2 border-[#666] flex flex-col pl-[2px] pt-[3px]">
            <Bar items={["cursor*","hand","zig","T","pen1","pen2","bus","cube","v","tree","v","table","pin","info"]} />
            <Bar items={["help","web","chk","form","rows","notepen","|"]} />
            <div className="h-px bg-[#b0b0b0] mx-[2px] my-[2px]" />
            <Bar items={["pa*","pw*","pn","ghost","V","pv","dArrow","dBolt","dCheck","pline","tri","grid","v","note"]} />
            <Bar items={["pageO","flow","!","clip","!","handles","blank","rot","mirv","mirh","!","binW","bin","!","pclip","!"]} />
            <div className="h-px bg-[#b0b0b0] mx-[2px] my-[2px]" />
            <Bar items={["r1","r2","r3","!","stack","stack2","!","zin","zout","z100","!","folderUp","!"]} />
            <div className="h-px bg-[#b0b0b0] mx-[2px] my-[2px]" />
            <Bar items={["dots","V","fontG","fontC","v"]} />
          </div>
          <div className="ml-[5px] w-[318px] h-[694px] flex shrink-0">
            <Schematic />
            <div className="w-[16px] flex flex-col bg-[#f3f3f3] border-l border-[#e4e4e4]">
              <div className="h-[24px] bg-[#f0f0f0] flex items-center justify-center pt-[6px]"><div className="border-x-[4px] border-b-[5px] border-x-transparent border-b-black" /></div>
              <div className="h-[228px] bg-[#f0f0f0] border-b-2 border-r-2 border-[#9a9a9a]" />
              <div className="flex-1 bg-[#f6f6f6]" />
              <div className="h-[16px] bg-[#f0f0f0] border-t border-[#888] border-r border-r-[#888] flex items-center justify-center"><div className="border-x-[4px] border-t-[5px] border-x-transparent border-t-black" /></div>
            </div>
          </div>
          <div className={`ml-[5px] w-[318px] h-[16px] bg-[#f0f0f0] flex items-center text-[12px] ${seg}`}>
            <div className="w-[4px] h-full border-r-2 border-[#888]" />
            <div className="w-[4px]" />
            {navIcons.map((d) => <NavBtn key={d} d={d} />)}
            <Slash back />
            <span className="font-bold font-['Liberation_Sans',sans-serif] text-[13px] mx-[1px] tracking-[-0.2px]">Main</span>
            <Slash />
            <span className="text-[11px]">Text</span>
            <Slash />
            <span className="text-[11px]">Models</span>
            <Slash />
            <span className="ml-[5px] w-[45px] overflow-hidden whitespace-nowrap text-[11px] border-r border-black">Power Su</span>
            <NavBtn d={navIcons[2]} />
            <NavBtn d={navIcons[3]} />
          </div>
        </div>

        {/* Analysis window */}
        <div className="flex-1 flex flex-col border-l border-[#555] bg-[#dce7f2]">
          <div className="h-[30px] flex items-end pb-[2px] pl-[8px] pr-[13px] bg-[linear-gradient(#b7c9da,#d9e5f1)]">
            <svg width="16" height="16" viewBox="0 0 16 16" className="mr-[5px] shrink-0">
              <rect x="0.500" y="0.500" width="15" height="15" fill="#fff" stroke="#1f2f6a" />
              <rect x="1" y="1" width="14" height="3" fill="#1f2f6a" />
              <rect x="3" y="6" width="10" height="7" fill="#6fc0c8" />
              <path d="M3 12l3-3 2 2 4-4" stroke="#124" fill="none" />
            </svg>
            <span className={`text-[11.500px] leading-[17px] text-[#333] ${seg}`}>Transient Analysis</span>
            <div className="ml-auto"><WinBtns /></div>
          </div>
          <div className="ml-[8px] w-[1558px] h-[31px] bg-[#f0f0f0] flex items-center pl-[2px] border-b-2 border-[#666]">
            <Bar items={analysisBar} />
          </div>
          <div className="ml-[8px] w-[1558px] h-[821px] shrink-0"><Plot /></div>
          <div className={`ml-[8px] w-[1558px] h-[18px] bg-[#f0f0f0] flex items-start text-[12px] relative ${seg}`}>
            <div className="w-[8px] h-[16px] border-r-2 border-[#888] shrink-0" />
            <div className="flex mt-[1px] shrink-0">{navIcons.map((d) => <NavBtn key={d} d={d} wide />)}</div>
            <Slash back />
            <span className="text-[#333] text-[11.500px] mx-[1px] leading-[16px]">MAIN</span>
            <Slash />
            <span className="font-bold font-['Liberation_Sans',sans-serif] text-[13px] mx-[1px] leading-[16px]">IFT/IFT</span>
            <Slash />
            <div className="flex-1 border-t border-black" />
            <div className="absolute right-[2px] top-0 w-[15px] h-[7px] bg-[#f0f0f0] border-r border-b border-[#888]" />
          </div>
        </div>
      </div>

      {/* Document tabs */}
      <div className={`h-[33px] shrink-0 bg-[#f0f0f0] flex items-start pl-[4px] pt-[1px] border-b border-[#dcdcdc] text-[#222] ${seg}`}>
        <div className="h-[22px] mt-[2px] w-[109px] flex items-center pl-[4px] text-[11px] border-b border-[#999] whitespace-nowrap">УМЗЧ ВВ 2021.CIR</div>
        <div className="h-[28px] w-[98px] flex items-center justify-center text-[10.500px] border-t-2 border-r-2 border-b-2 border-[#666] whitespace-nowrap">Transient Analysis</div>
        <div className="flex-1 border-t-2 border-[#666]" />
      </div>

      {/* Status bar */}
      <div className="h-[18px] shrink-0 flex bg-[#f0f0f0] text-[14.500px] leading-[18px] text-black overflow-hidden">
        <div className="w-[158px] pl-[1px] border-l border-t border-r border-[#a8a8a8]">Scale Mode</div>
        <div className="flex-1 ml-[3px] pl-[1px] border-l border-t border-[#a8a8a8]">The Status Bar</div>
        <div className="w-[134px] ml-[3px] border-l border-t border-[#a8a8a8]" />
      </div>

      {/* Desktop + taskbar */}
      <div className="flex-1 flex justify-end items-end bg-white">
        <div className={`w-[258px] h-[40px] flex items-center text-white bg-[linear-gradient(#33609a,#244d80)] border-t border-[#5a82b0] relative ${seg}`}>
          <div className="w-[8px] h-[30px] ml-[3px] border-x-2 border-dotted border-[#7a9cc4]" />
          <span className="ml-[9px] text-[12px] -mt-[6px]">EN</span>
          <div className="ml-[20px] border-x-[4px] border-b-[4px] border-x-transparent border-b-white" />
          <svg width="18" height="14" viewBox="0 0 18 14" className="ml-[12px]"><ellipse cx="9" cy="7" rx="8" ry="6" fill="#76b900" /><ellipse cx="10" cy="7" rx="4" ry="3" fill="none" stroke="#2b5020" /></svg>
          <svg width="16" height="16" viewBox="0 0 16 16" className="ml-[6px]"><path d="M2 1v14" stroke="#fff" /><path d="M3 2h7v6H3zM10 4h5l-2 2.500L15 8h-5z" fill="#fff" /></svg>
          <svg width="16" height="16" viewBox="0 0 16 16" className="ml-[8px]"><path d="M3 4h11v8H3z" fill="#26456f" stroke="#fff" /><path d="M1 1h3v5H1zM6 14h6" stroke="#fff" fill="#26456f" /></svg>
          <svg width="16" height="16" viewBox="0 0 16 16" className="ml-[8px]"><path d="M1 6h3l4-4v12l-4-4H1z" fill="#e8eef6" /><path d="M10 5c1.500 2 1.500 4 0 6M12 3c2.500 3 2.500 7 0 10" stroke="#dde" fill="none" /></svg>
          <div className="ml-[11px] w-[70px] text-center text-[12px] leading-[17px]">
            <div>9:02</div>
            <div>22.09.2021</div>
          </div>
          <div className="absolute right-[1px] top-0 w-[12px] h-full border border-[#7a9cc4] bg-[linear-gradient(#7fa0c4,#2a5a96)] rounded-[1px]" />
        </div>
      </div>
    </div>
  );
}
